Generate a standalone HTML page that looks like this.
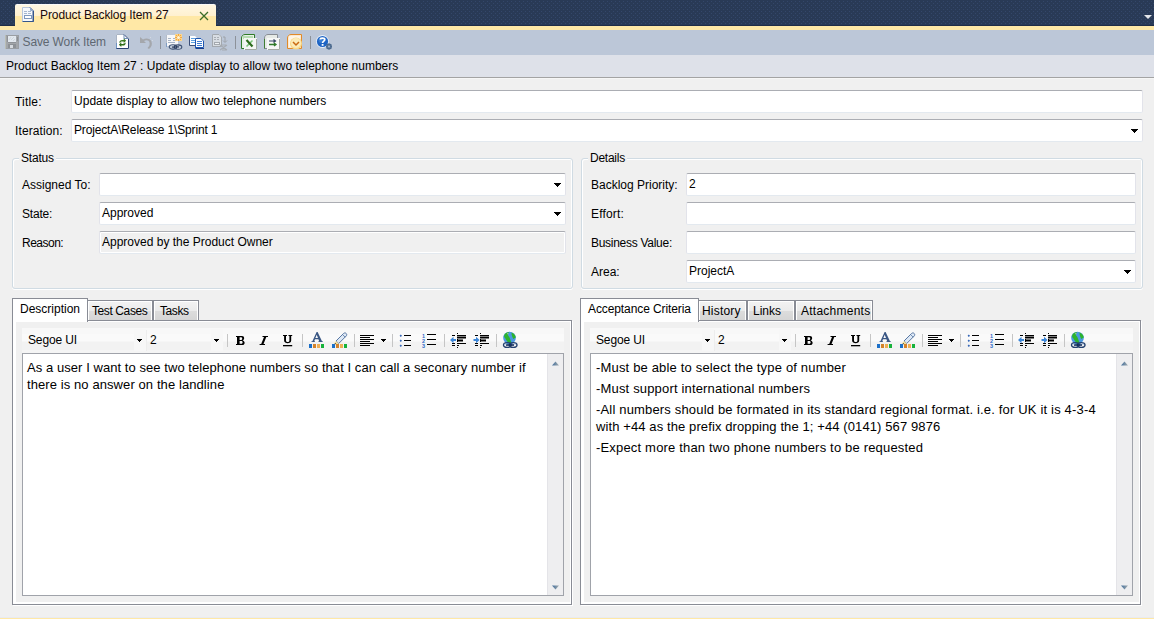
<!DOCTYPE html>
<html><head><meta charset="utf-8">
<style>
*{box-sizing:border-box;margin:0;padding:0}
html,body{width:1154px;height:619px;overflow:hidden;background:#F0F0F0;font-family:"Liberation Sans",sans-serif;font-size:12px;color:#000}
.a{position:absolute}
.t{position:absolute;white-space:nowrap;line-height:14px}
#nav{left:0;top:0;width:1154px;height:26px;background-color:#293A56}
#navline{left:0;top:25px;width:1154px;height:1px;background:#1F2D47}
#band{left:0;top:26px;width:1154px;height:4px;background:#FFE8A6}
#doctab{left:15px;top:4px;width:201px;height:26px;border-radius:2px 2px 0 0;background:linear-gradient(#FAFAF8 0,#FAFAF8 1px,#FFF7E2 1px,#FFF1D0 12px,#FFE8A6 12px,#FFE8A6 100%)}
#tb{left:0;top:30px;width:1154px;height:25px;background:#BCC7D8}
#cap{left:0;top:55px;width:1154px;height:22px;background:#DEE1E9}
#capline{left:0;top:77px;width:1154px;height:1px;background:#A3A3A3}
#capline2{left:0;top:78px;width:1154px;height:1px;background:#F6F6F6}
#botline{left:0;top:617px;width:1154px;height:2px;background:linear-gradient(#E9EBF0 0,#E9EBF0 1px,#FFE8A6 1px)}
.sep{position:absolute;width:1px;background:#8592A8}
.box{position:absolute;background:#fff;border:1px solid;border-color:#ABADB3 #E2E3EA #E3E9EF #E2E3EA;border-radius:2px}
.ro{background:#F0F0F0;box-shadow:inset 0 0 0 1px #fff}
.arr{position:absolute;width:0;height:0;border-left:3.5px solid transparent;border-right:3.5px solid transparent;border-top:4px solid #000}
.grp{position:absolute;border:1px solid #D0DBE3;border-radius:3px;box-shadow:inset 1px 1px 0 #fff,inset -1px 0 0 #fff,0 1px 0 #fff}
.grpt{position:absolute;background:#F0F0F0;padding:0 2px;white-space:nowrap;line-height:14px}
.tab{position:absolute;border:1px solid #898C95;border-bottom:none;background:linear-gradient(#F3F3F3 0,#EBEBEB 50%,#DDDDDD 51%,#D5D5D5 100%);box-shadow:inset 1px 1px 0 #fff,inset -1px 0 0 #fff}
.tabact{position:absolute;border:1px solid #898C95;border-bottom:none;background:#fff}
.panel{position:absolute;border:1px solid #898C95;background:#fff;box-shadow:1px 1px 0 #fff}
.pin{position:absolute;background:#F0F0F0}
.rtb{position:absolute;background:#fff}
.ed{position:absolute;background:#fff;border:1px solid #A0A3AA}
.sb{position:absolute;background:#EEEEF0;border-left:1px solid #E4E4E8}
.arr5{position:absolute;width:0;height:0;border-left:3px solid transparent;border-right:3px solid transparent;border-top:3px solid #000}
.tsep{position:absolute;top:6px;width:1px;height:13px;background:#C5C5C5}
.ed .txt{position:absolute;font-size:13px;line-height:17px;white-space:nowrap}
</style></head><body>
<div id="nav" class="a"></div>
<svg class="a" style="left:0;top:0" width="1154" height="25"><defs><pattern id="dots" x="0" y="0" width="4" height="4" patternUnits="userSpaceOnUse"><rect x="3" y="1" width="1" height="1" fill="#34476A"/><rect x="1" y="3" width="1" height="1" fill="#34476A"/></pattern></defs><rect width="1154" height="25" fill="url(#dots)"/></svg>
<div id="navline" class="a"></div>
<div id="band" class="a"></div>
<div id="doctab" class="a"></div>
<!-- doc icon -->
<svg class="a" style="left:22px;top:7px" width="12" height="15" viewBox="0 0 12 15">
 <path d="M0 0H8L12 4V15H0Z" fill="#F6F8FB"/>
 <path d="M0.5 14.5V0.5H8" stroke="#B9C7DB" fill="none"/>
 <path d="M8 0.5L11.5 4V14.5H0.5" stroke="#34558A" fill="none"/>
 <path d="M11 4V15" stroke="#34558A"/>
 <path d="M8.5 0.5V3.5H11.5" stroke="#8FA8CC" fill="none"/>
 <path d="M2 4.5H5M6 4.5H9M2 6.5H5M6 6.5H9" stroke="#A7B8D0"/>
 <rect x="2.5" y="8.5" width="7" height="3" fill="#FFFFFF" stroke="#7F98BD"/>
</svg>
<div class="t" style="left:40px;top:8px;color:#1A0A0A;letter-spacing:-0.09px">Product Backlog Item 27</div>
<svg class="a" style="left:199px;top:11px" width="10" height="10" viewBox="0 0 10 10"><path d="M1 1L9 9M9 1L1 9" stroke="#3A6E28" stroke-width="1.25"/></svg>
<!-- nav dropdown -->
<svg class="a" style="left:1144px;top:15px" width="8" height="4" viewBox="0 0 8 4"><path d="M0 0H8L4 4Z" fill="#E4E6EA"/></svg>

<div id="tb" class="a"></div>
<!-- floppy -->
<svg class="a" style="left:5px;top:35px" width="14" height="14" viewBox="0 0 14 14">
 <rect x="0" y="0" width="14" height="14" fill="#A3A6AA"/>
 <rect x="0.5" y="0.5" width="13" height="13" fill="none" stroke="#9A9EA3"/>
 <rect x="0" y="0" width="1" height="14" fill="#B9BDB6"/>
 <rect x="2" y="1" width="1" height="6" fill="#8E9196"/>
 <rect x="3" y="1" width="8" height="6" fill="#E2E8EF"/>
 <path d="M4 5L6 2M6 5L9 2M8 6L10 4" stroke="#C9CED4" stroke-width="0.7"/>
 <rect x="3" y="7" width="8" height="1" fill="#8F9398"/>
 <rect x="3" y="9" width="8" height="4" fill="#8D9196"/>
 <rect x="5" y="10" width="3" height="3" fill="#D6DADF"/>
 <rect x="12" y="2" width="1" height="4" fill="#8A8E93"/>
</svg>
<div class="t" style="left:22.5px;top:35px;color:#5F6771;letter-spacing:-0.12px">Save Work Item</div>
<!-- refresh -->
<svg class="a" style="left:116px;top:34px" width="13" height="15" viewBox="0 0 13 15">
 <path d="M0 0H8L13 5V15H0Z" fill="#FFFFFF"/>
 <path d="M0.5 15V0.5H8" stroke="#A9B4C4" fill="none"/>
 <path d="M0.5 9V15" stroke="#6E93C2"/>
 <path d="M8 0.5L12.5 5V14.5H0.5" stroke="#2B4272" fill="none"/>
 <path d="M8 0.5V4.5H12" stroke="#6F8DB8" fill="none"/>
 <g transform="translate(1.3,1.9) scale(0.8)"><path d="M2.5 8.5C2.5 6 4 5 6 5H8V3L11 6L8 9V7H6C4.8 7 4 7.5 3.8 8.5Z" fill="#3B7A1E"/>
 <path d="M10.5 8.5C10.5 11 9 12 7 12H5V14L2 11L5 8V10H7C8.2 10 9 9.5 9.2 8.5Z" fill="#2F6E18"/></g>
</svg>
<!-- undo disabled -->
<svg class="a" style="left:140px;top:35px" width="13" height="14" viewBox="0 0 13 14">
 <path d="M0 2V8H6L4 6C6 4.5 9 5 9.5 7.5C10 10 9 11.5 7.5 13L9 14C11.5 12 12.5 9.5 11.5 6.5C10.5 3.5 6 2.5 3 4.5Z" fill="#A4A7AC"/>
 <path d="M10 3L11 2M12 6L13 5" stroke="#D8DCE2" stroke-width="0.8"/>
</svg>
<div class="sep" style="left:160px;top:36px;height:13px;background:#8C9199"></div>
<!-- new linked -->
<svg class="a" style="left:166px;top:34px" width="17" height="16" viewBox="0 0 17 16">
 <rect x="0" y="1" width="12" height="11" fill="#F7F8FA"/>
 <path d="M0.5 1V13" stroke="#B4BCC8"/>
 <path d="M0.5 9V13" stroke="#7F9DC4"/>
 <path d="M2 4.5H5M7 4.5H10M2 6.5H5M7 6.5H10M2 8.5H9" stroke="#A7B4C6"/>
 <rect x="9" y="0" width="7" height="7" fill="#FBD58C"/>
 <path d="M12.5 0V7M9 3.5H16M10 1L15 6M15 1L10 6" stroke="#F29A2E" stroke-width="0.8"/>
 <circle cx="12.5" cy="3.5" r="1.5" fill="#FFF6D8"/>
 <ellipse cx="7" cy="13" rx="3.8" ry="2.1" fill="none" stroke="#3A4E70" stroke-width="1.1"/>
 <ellipse cx="12" cy="13" rx="3.8" ry="2.1" fill="none" stroke="#3A4E70" stroke-width="1.1"/>
 <path d="M6 13H13" stroke="#1E2E50" stroke-width="1.2"/>
 <path d="M4.5 11.8H8M11 14.2H14.5" stroke="#DDE8F5" stroke-width="0.6"/>
</svg>
<!-- copy -->
<svg class="a" style="left:189px;top:35px" width="16" height="14" viewBox="0 0 16 14">
 <path d="M0 1H6L8 3V10H0Z" fill="#FDFEFF"/>
 <path d="M0.5 1V10.5H7" stroke="#3A4E78" fill="none"/>
 <path d="M2 3.5H6M2 5.5H6M2 7.5H6" stroke="#5BA0E0"/>
 <path d="M6 3H12L15 6V13H6Z" fill="#FDFEFF"/>
 <path d="M6.5 13V3.5H12L14.5 6V12.5H6.5" stroke="#1F56B0" fill="none"/>
 <path d="M6.5 13.5H15" stroke="#183F8A"/>
 <path d="M8 6.5H13M8 8.5H13M8 10.5H13" stroke="#3C7BD2"/>
</svg>
<!-- disabled -->
<svg class="a" style="left:212px;top:34px" width="17" height="17" viewBox="0 0 17 17">
 <path d="M0 0H7L10 3V13H0Z" fill="#D8DDE3"/>
 <path d="M0.5 13V0.5H7L9.5 3V12.5H0.5" stroke="#A3A8AE" fill="none"/>
 <path d="M2 3.5H4M5 3.5H7M2 5.5H4M5 5.5H7" stroke="#A9AEB5"/>
 <rect x="2.5" y="8.5" width="5" height="2" fill="#EEF1F4" stroke="#A3A8AE"/>
 <path d="M11 3H13V8M11 6.5L13 8.5L15 6.5" stroke="#9DA2A8" fill="none"/>
 <path d="M8 11L15 16M15 11L8 16M10 11H14M10 16H14" stroke="#A6ABB1" stroke-width="1.1"/>
</svg>
<div class="sep" style="left:235px;top:36px;height:13px;background:#8C9199"></div>
<!-- excel -->
<svg class="a" style="left:241px;top:34px" width="16" height="16" viewBox="0 0 16 16">
 <path d="M0.5 14.5V4C0.5 2 2 0.5 4 0.5H13.5V14.5Z" fill="#E9F1E8" stroke="#2F7A28"/>
 <rect x="2" y="2" width="10" height="3" fill="#B6DDB2"/>
 <rect x="3" y="4" width="13" height="12" fill="#F4F6F4"/>
 <path d="M15.5 5V15.5H4" stroke="#A3AAA3" fill="none"/>
 <path d="M11.5 6.5L5.5 12.5" stroke="#7CC47A" stroke-width="1.6"/>
 <path d="M5.5 6L11.5 12.5" stroke="#2D6B1C" stroke-width="2.2"/>
</svg>
<!-- project -->
<svg class="a" style="left:264px;top:34px" width="16" height="16" viewBox="0 0 16 16">
 <path d="M0.5 14.5V4C0.5 2 2 0.5 4 0.5H13.5V14.5Z" fill="#E6EAE6" stroke="#878C92"/>
 <path d="M0.5 5V14.5" stroke="#3F7E33"/>
 <rect x="3" y="4" width="13" height="12" fill="#F6F7F6"/>
 <path d="M15.5 5V15.5H4" stroke="#A3AAA3" fill="none"/>
 <path d="M5 7H11M9.5 5.5L11.5 7L9.5 8.5" stroke="#3A4A66" stroke-width="1.2" fill="none"/>
 <path d="M5 10.5H12M10 9L12 10.5L10 12" stroke="#2F7A28" stroke-width="1.3" fill="none"/>
</svg>
<!-- outlook -->
<svg class="a" style="left:287px;top:34px" width="16" height="16" viewBox="0 0 16 16">
 <path d="M0.5 14.5V4C0.5 2 2 0.5 4 0.5H14.5V14.5Z" fill="#FBE9D0" stroke="#E18A2A"/>
 <rect x="2" y="2" width="11" height="11" fill="#FFF5E6"/>
 <circle cx="9" cy="9.5" r="6" fill="#F7D98A"/>
 <circle cx="9" cy="9" r="5" fill="#FCEBB8"/>
 <path d="M6 8L9 11L12 8" stroke="#C96A12" stroke-width="1.5" fill="none"/>
</svg>
<div class="sep" style="left:310px;top:36px;height:13px;background:#8C9199"></div>
<!-- help -->
<svg class="a" style="left:316px;top:35px" width="17" height="15" viewBox="0 0 17 15">
 <circle cx="6.5" cy="6.5" r="6.5" fill="#E8F0FA"/>
 <circle cx="6.5" cy="6.5" r="5.6" fill="#1E64C4"/>
 <circle cx="5.5" cy="5" r="3" fill="#4A8EE0" opacity="0.6"/>
 <path d="M4.3 4.6C4.3 2.6 8.8 2.6 8.8 4.6C8.8 6.2 6.6 6.2 6.6 8" stroke="#fff" stroke-width="1.7" fill="none"/>
 <rect x="5.7" y="9" width="1.8" height="1.8" fill="#fff"/>
 <circle cx="13" cy="11.5" r="2.2" fill="none" stroke="#4C6A8E" stroke-width="1.4"/>
 <path d="M13 8.5V14.5M10 11.5H16M11 9.5L15 13.5M15 9.5L11 13.5" stroke="#4C6A8E" stroke-width="0.9"/>
 <circle cx="13" cy="11.5" r="0.8" fill="#BCC7D8"/>
</svg>

<div id="cap" class="a"></div>
<div class="t" style="left:6px;top:59px">Product Backlog Item 27 : Update display to allow two telephone numbers</div>
<div id="capline" class="a"></div>
<div id="capline2" class="a"></div>

<!-- Title / Iteration -->
<div class="t" style="left:15px;top:95px;letter-spacing:0.2px">Title:</div>
<div class="box" style="left:71px;top:90px;width:1072px;height:23px"></div>
<div class="t" style="left:74px;top:94px;letter-spacing:0.02px">Update display to allow two telephone numbers</div>
<div class="t" style="left:15px;top:124px;letter-spacing:0.11px">Iteration:</div>
<div class="box" style="left:71px;top:119px;width:1072px;height:23px"></div>
<div class="t" style="left:74px;top:123px;letter-spacing:-0.15px">ProjectA\Release 1\Sprint 1</div>
<svg class="a" style="left:1131px;top:129px" width="7" height="4" shape-rendering="crispEdges"><path d="M0 0H7V1H6V2H5V3H4V4H3V3H2V2H1V1H0Z" fill="#000"/></svg>

<!-- Status group -->
<div class="grp" style="left:12px;top:158px;width:561px;height:131px"></div>
<div class="grpt" style="left:19px;top:151px;letter-spacing:-0.2px">Status</div>
<div class="t" style="left:22px;top:178px">Assigned To:</div>
<div class="box" style="left:99px;top:173px;width:467px;height:23px"></div>
<svg class="a" style="left:554px;top:183px" width="7" height="4" shape-rendering="crispEdges"><path d="M0 0H7V1H6V2H5V3H4V4H3V3H2V2H1V1H0Z" fill="#000"/></svg>
<div class="t" style="left:22px;top:207px;letter-spacing:-0.2px">State:</div>
<div class="box" style="left:99px;top:202px;width:467px;height:23px"></div>
<div class="t" style="left:102px;top:206px">Approved</div>
<svg class="a" style="left:554px;top:212px" width="7" height="4" shape-rendering="crispEdges"><path d="M0 0H7V1H6V2H5V3H4V4H3V3H2V2H1V1H0Z" fill="#000"/></svg>
<div class="t" style="left:22px;top:236px;letter-spacing:-0.5px">Reason:</div>
<div class="box ro" style="left:99px;top:231px;width:467px;height:23px"></div>
<div class="t" style="left:102px;top:235px">Approved by the Product Owner</div>

<!-- Details group -->
<div class="grp" style="left:581px;top:158px;width:562px;height:131px"></div>
<div class="grpt" style="left:588px;top:151px;letter-spacing:-0.25px">Details</div>
<div class="t" style="left:591px;top:178px">Backlog Priority:</div>
<div class="box" style="left:686px;top:173px;width:450px;height:23px"></div>
<div class="t" style="left:689px;top:177px">2</div>
<div class="t" style="left:591px;top:207px;letter-spacing:0.17px">Effort:</div>
<div class="box" style="left:686px;top:202px;width:450px;height:23px"></div>
<div class="t" style="left:591px;top:236px;letter-spacing:-0.28px">Business Value:</div>
<div class="box" style="left:686px;top:231px;width:450px;height:23px"></div>
<div class="t" style="left:591px;top:265px">Area:</div>
<div class="box" style="left:686px;top:260px;width:450px;height:23px"></div>
<div class="t" style="left:689px;top:264px">ProjectA</div>
<svg class="a" style="left:1124px;top:270px" width="7" height="4" shape-rendering="crispEdges"><path d="M0 0H7V1H6V2H5V3H4V4H3V3H2V2H1V1H0Z" fill="#000"/></svg>

<!-- Left tab control -->
<div class="panel" style="left:12px;top:320px;width:560px;height:285px"></div>
<div class="pin" style="left:16px;top:322px;width:554px;height:280px"></div>
<div class="tab" style="left:87px;top:300px;width:66px;height:20px"></div>
<div class="tab" style="left:153px;top:300px;width:46px;height:20px"></div>
<div class="tabact" style="left:12px;top:298px;width:76px;height:24px"></div>
<div class="t" style="left:20px;top:302px">Description</div>
<div class="t" style="left:92px;top:304px;letter-spacing:-0.4px">Test Cases</div>
<div class="t" style="left:160px;top:304px;letter-spacing:-0.4px">Tasks</div>

<!-- Right tab control -->
<div class="panel" style="left:580px;top:320px;width:561px;height:285px"></div>
<div class="pin" style="left:584px;top:322px;width:555px;height:280px"></div>
<div class="tab" style="left:698px;top:300px;width:49px;height:20px"></div>
<div class="tab" style="left:747px;top:300px;width:48px;height:20px"></div>
<div class="tab" style="left:795px;top:300px;width:78px;height:20px"></div>
<div class="tabact" style="left:580px;top:298px;width:119px;height:24px"></div>
<div class="t" style="left:588px;top:302px;letter-spacing:-0.1px">Acceptance Criteria</div>
<div class="t" style="left:702px;top:304px;letter-spacing:0.2px">History</div>
<div class="t" style="left:753px;top:304px">Links</div>
<div class="t" style="left:801px;top:304px;letter-spacing:0.25px">Attachments</div>

<!-- EDITORS -->
<div class="a" style="left:22px;top:328px;width:542px;height:25px;background:linear-gradient(#F8F8F8 0,#F8F8F8 6px,#FAFAFA 6px,#FAFAFA 13px,#F2F2F2 14px,#F2F2F2 22px,#F5F5F5 22px)">
 <div class="t" style="left:6px;top:5px;font-size:12px;letter-spacing:-0.15px">Segoe UI</div>
 <div class="a" style="left:112px;top:1px;width:12px;height:22px;background:#F7F7F7"></div>
 <svg class="a" style="left:115px;top:11px" width="5" height="3" shape-rendering="crispEdges"><path d="M0 0H5V1H4V2H3V3H2V2H1V1H0Z" fill="#000"/></svg>
 <div class="a" style="left:124px;top:2px;width:1px;height:21px;background:#EDEDED"></div>
 <div class="t" style="left:128px;top:5px;font-size:12px">2</div>
 <div class="a" style="left:189px;top:1px;width:12px;height:22px;background:#F7F7F7"></div>
 <svg class="a" style="left:192px;top:11px" width="5" height="3" shape-rendering="crispEdges"><path d="M0 0H5V1H4V2H3V3H2V2H1V1H0Z" fill="#000"/></svg>
 <div class="tsep" style="left:205px"></div>
 <svg class="a" style="left:214px;top:8px" width="10" height="10" viewBox="0 0 10 10"><path fill-rule="evenodd" d="M0 0H6C8.8 0 8.8 3.9 6.6 4.4C9.4 4.8 9.4 9 6.2 9H0V8H1V1H0ZM3.6 1.2V3.9H5.3C6.6 3.9 6.6 1.2 5.3 1.2ZM3.6 5V7.8H5.5C7 7.8 7 5 5.5 5Z" fill="#000"/></svg>
 <svg class="a" style="left:237px;top:8px" width="10" height="10" viewBox="0 0 10 10"><path d="M3.6 0H9V1.1H7.3L4.5 7.9H6V9H0.6V7.9H2.2L5 1.1H3.4Z" fill="#000"/></svg>
 <svg class="a" style="left:261px;top:7px" width="10" height="12" viewBox="0 0 10 12"><path d="M0 0H4V1.1H3V5.6C3 7.6 6.4 7.6 6.4 5.6V1.1H5.5V0H9.2V1.1H8.2V5.6C8.2 9.2 1.1 9.2 1.1 5.6V1.1H0Z" fill="#000"/><rect x="0" y="10" width="9.2" height="1.3" fill="#000"/></svg>
 <div class="tsep" style="left:280px"></div>
 <svg class="a" style="left:287px;top:4px" width="16" height="16" viewBox="0 0 16 16">
  <path fill-rule="evenodd" d="M2.5 10H6V9.2H5.2L6 7.2H9.4L10.2 9.2H9.4V10H13.8V9.2H13L8.6 0H7.6L3.4 9.2H2.5ZM6.4 6.1L7.7 2.8L9 6.1Z" fill="#3A5784"/>
  <rect x="0" y="12" width="3" height="4" fill="#1B6FC8"/><rect x="4" y="12" width="3" height="4" fill="#D4832B"/><rect x="8" y="12" width="3" height="4" fill="#EEAF55"/><rect x="12" y="12" width="3" height="4" fill="#16B23A"/>
 </svg>
 <svg class="a" style="left:310px;top:4px" width="16" height="16" viewBox="0 0 16 16">
  <path d="M4 9L11.5 1.5C12.3 0.7 13.6 0.7 14.2 1.5C14.9 2.2 14.9 3.3 14.2 4L6.7 11.5Z" fill="#DDE8F5" stroke="#5877A3" stroke-width="1"/>
  <path d="M10.5 2.5L13.2 5.2" stroke="#5877A3" stroke-width="0.8"/>
  <path d="M2 11.5L4 9L6.7 11.5L3.3 12.5Z" fill="#F1DE9A"/>
  <path d="M2 12.5L3.5 11L4 12Z" fill="#222"/>
  <rect x="0" y="12" width="3" height="4" fill="#1B6FC8"/><rect x="4" y="12" width="3" height="4" fill="#D4832B"/><rect x="8" y="12" width="3" height="4" fill="#EEAF55"/><rect x="12" y="12" width="3" height="4" fill="#16B23A"/>
 </svg>
 <div class="tsep" style="left:332px"></div>
 <svg class="a" style="left:338px;top:7px" width="15" height="12" viewBox="0 0 15 12">
  <path d="M0 0.5H14M0 2.5H10M0 4.5H14M0 6.5H10M0 8.5H14M0 10.5H10" stroke="#000" stroke-width="1"/>
 </svg>
 <svg class="a" style="left:359px;top:11px" width="5" height="3" shape-rendering="crispEdges"><path d="M0 0H5V1H4V2H3V3H2V2H1V1H0Z" fill="#000"/></svg>
 <div class="tsep" style="left:370px"></div>
 <svg class="a" style="left:377px;top:6px" width="14" height="14" viewBox="0 0 14 14">
  <path d="M1.8 0.5L3 1.8L1.8 3L0.6 1.8ZM1.8 5.5L3 6.8L1.8 8L0.6 6.8ZM1.8 10.5L3 11.8L1.8 13L0.6 11.8Z" fill="#2F62B5"/>
  <path d="M5 1.5H12M5 6.5H12M5 11.5H12" stroke="#000" stroke-width="1.1"/>
 </svg>
 <svg class="a" style="left:400px;top:5px" width="16" height="15" viewBox="0 0 16 15">
  <text x="0" y="5" font-family="Liberation Sans" font-weight="bold" font-size="5.5" fill="#2F6AC8">1</text>
  <text x="0" y="10" font-family="Liberation Sans" font-weight="bold" font-size="5.5" fill="#2F6AC8">2</text>
  <text x="0" y="15" font-family="Liberation Sans" font-weight="bold" font-size="5.5" fill="#2F6AC8">3</text>
  <path d="M5 1.5H14M5 6.5H14M5 11.5H14" stroke="#000" stroke-width="1.1"/>
 </svg>
 <div class="tsep" style="left:422px"></div>
 <svg class="a" style="left:428px;top:5px" width="17" height="15" viewBox="0 0 17 15">
  <path d="M7.5 0V1M7.5 2V15" stroke="#000" stroke-width="1" stroke-dasharray="1 1"/>
  <path d="M2 2.5H5M7 2.5H16M7 10.5H16M2 10.5H5M2 12.5H5M7 12.5H9" stroke="#000" stroke-width="1"/>
  <path d="M7 4.5H16M7 7.5H13" stroke="#000" stroke-width="2"/>
  <path d="M0 7L3.5 3.8V6H6V8H3.5V10.2Z" fill="#3C86D8"/>
 </svg>
 <svg class="a" style="left:451px;top:5px" width="17" height="15" viewBox="0 0 17 15">
  <path d="M7.5 0V1M7.5 2V15" stroke="#000" stroke-width="1" stroke-dasharray="1 1"/>
  <path d="M2 2.5H5M7 2.5H16M7 10.5H16M2 10.5H5M2 12.5H5M7 12.5H9" stroke="#000" stroke-width="1"/>
  <path d="M7 4.5H16M7 7.5H13" stroke="#000" stroke-width="2"/>
  <path d="M6.5 7L3 3.8V6H0.5V8H3V10.2Z" fill="#3C86D8"/>
 </svg>
 <div class="tsep" style="left:474px"></div>
 <svg class="a" style="left:480px;top:3px" width="17" height="18" viewBox="0 0 17 18">
  <circle cx="7.5" cy="7" r="6.3" fill="#4B97E0"/>
  <path d="M2.5 3.5C4 1.5 6 1 7 1.5C6 3 5.5 4 6.5 5C7.5 6 8 7.5 8.5 9L9.5 12L7.5 13C5.5 11 4 9 3.5 7.5C2 6.5 1.8 5 2.5 3.5Z" fill="#2DB42D"/>
  <path d="M9.5 1.5C11.5 2 13.5 4 13.8 6.5L11.2 8C10.5 6 9.3 4 9.5 1.5Z" fill="#2DB42D"/>
  <path d="M5 2.5L6.5 2.2L6 3.5Z" fill="#F2F2D8"/>
  <ellipse cx="5.3" cy="14" rx="3.8" ry="2.4" fill="none" stroke="#23406E" stroke-width="1.4"/>
  <ellipse cx="11.2" cy="14" rx="3.8" ry="2.4" fill="none" stroke="#23406E" stroke-width="1.4"/>
  <path d="M4 14H12" stroke="#0E2A5A" stroke-width="1.6"/>
  <path d="M2.5 13.2H4.5M12 13.2H14" stroke="#9CC0E8" stroke-width="0.7"/>
 </svg>
</div>
<div class="ed" style="left:22px;top:353px;width:542px;height:243px">
 <div class="txt" style="left:4px;top:5px;letter-spacing:0.06px">As a user I want to see two telephone numbers so that I can call a seconary number if</div>
 <div class="txt" style="left:4px;top:22px;letter-spacing:0.09px">there is no answer on the landline</div>
 <div class="sb" style="left:524px;top:0;width:16px;height:241px"></div>
 <svg class="a" style="left:529px;top:7px" width="8" height="5" viewBox="0 0 8 5"><defs><linearGradient id="ga22" x1="0" x2="1"><stop offset="0" stop-color="#3F6C9C"/><stop offset="1" stop-color="#A4ACAE"/></linearGradient></defs><path d="M0 4.5L3.5 0.5L7 4.5Z" fill="url(#ga22)"/></svg>
 <svg class="a" style="left:529px;top:231px" width="8" height="5" viewBox="0 0 8 5"><defs><linearGradient id="gb22" x1="0" x2="1"><stop offset="0" stop-color="#3F6C9C"/><stop offset="1" stop-color="#A4ACAE"/></linearGradient></defs><path d="M0 0.5L3.5 4.5L7 0.5Z" fill="url(#gb22)"/></svg>
</div>
<div class="a" style="left:590px;top:328px;width:543px;height:25px;background:linear-gradient(#F8F8F8 0,#F8F8F8 6px,#FAFAFA 6px,#FAFAFA 13px,#F2F2F2 14px,#F2F2F2 22px,#F5F5F5 22px)">
 <div class="t" style="left:6px;top:5px;font-size:12px;letter-spacing:-0.15px">Segoe UI</div>
 <div class="a" style="left:112px;top:1px;width:12px;height:22px;background:#F7F7F7"></div>
 <svg class="a" style="left:115px;top:11px" width="5" height="3" shape-rendering="crispEdges"><path d="M0 0H5V1H4V2H3V3H2V2H1V1H0Z" fill="#000"/></svg>
 <div class="a" style="left:124px;top:2px;width:1px;height:21px;background:#EDEDED"></div>
 <div class="t" style="left:128px;top:5px;font-size:12px">2</div>
 <div class="a" style="left:189px;top:1px;width:12px;height:22px;background:#F7F7F7"></div>
 <svg class="a" style="left:192px;top:11px" width="5" height="3" shape-rendering="crispEdges"><path d="M0 0H5V1H4V2H3V3H2V2H1V1H0Z" fill="#000"/></svg>
 <div class="tsep" style="left:205px"></div>
 <svg class="a" style="left:214px;top:8px" width="10" height="10" viewBox="0 0 10 10"><path fill-rule="evenodd" d="M0 0H6C8.8 0 8.8 3.9 6.6 4.4C9.4 4.8 9.4 9 6.2 9H0V8H1V1H0ZM3.6 1.2V3.9H5.3C6.6 3.9 6.6 1.2 5.3 1.2ZM3.6 5V7.8H5.5C7 7.8 7 5 5.5 5Z" fill="#000"/></svg>
 <svg class="a" style="left:237px;top:8px" width="10" height="10" viewBox="0 0 10 10"><path d="M3.6 0H9V1.1H7.3L4.5 7.9H6V9H0.6V7.9H2.2L5 1.1H3.4Z" fill="#000"/></svg>
 <svg class="a" style="left:261px;top:7px" width="10" height="12" viewBox="0 0 10 12"><path d="M0 0H4V1.1H3V5.6C3 7.6 6.4 7.6 6.4 5.6V1.1H5.5V0H9.2V1.1H8.2V5.6C8.2 9.2 1.1 9.2 1.1 5.6V1.1H0Z" fill="#000"/><rect x="0" y="10" width="9.2" height="1.3" fill="#000"/></svg>
 <div class="tsep" style="left:280px"></div>
 <svg class="a" style="left:287px;top:4px" width="16" height="16" viewBox="0 0 16 16">
  <path fill-rule="evenodd" d="M2.5 10H6V9.2H5.2L6 7.2H9.4L10.2 9.2H9.4V10H13.8V9.2H13L8.6 0H7.6L3.4 9.2H2.5ZM6.4 6.1L7.7 2.8L9 6.1Z" fill="#3A5784"/>
  <rect x="0" y="12" width="3" height="4" fill="#1B6FC8"/><rect x="4" y="12" width="3" height="4" fill="#D4832B"/><rect x="8" y="12" width="3" height="4" fill="#EEAF55"/><rect x="12" y="12" width="3" height="4" fill="#16B23A"/>
 </svg>
 <svg class="a" style="left:310px;top:4px" width="16" height="16" viewBox="0 0 16 16">
  <path d="M4 9L11.5 1.5C12.3 0.7 13.6 0.7 14.2 1.5C14.9 2.2 14.9 3.3 14.2 4L6.7 11.5Z" fill="#DDE8F5" stroke="#5877A3" stroke-width="1"/>
  <path d="M10.5 2.5L13.2 5.2" stroke="#5877A3" stroke-width="0.8"/>
  <path d="M2 11.5L4 9L6.7 11.5L3.3 12.5Z" fill="#F1DE9A"/>
  <path d="M2 12.5L3.5 11L4 12Z" fill="#222"/>
  <rect x="0" y="12" width="3" height="4" fill="#1B6FC8"/><rect x="4" y="12" width="3" height="4" fill="#D4832B"/><rect x="8" y="12" width="3" height="4" fill="#EEAF55"/><rect x="12" y="12" width="3" height="4" fill="#16B23A"/>
 </svg>
 <div class="tsep" style="left:332px"></div>
 <svg class="a" style="left:338px;top:7px" width="15" height="12" viewBox="0 0 15 12">
  <path d="M0 0.5H14M0 2.5H10M0 4.5H14M0 6.5H10M0 8.5H14M0 10.5H10" stroke="#000" stroke-width="1"/>
 </svg>
 <svg class="a" style="left:359px;top:11px" width="5" height="3" shape-rendering="crispEdges"><path d="M0 0H5V1H4V2H3V3H2V2H1V1H0Z" fill="#000"/></svg>
 <div class="tsep" style="left:370px"></div>
 <svg class="a" style="left:377px;top:6px" width="14" height="14" viewBox="0 0 14 14">
  <path d="M1.8 0.5L3 1.8L1.8 3L0.6 1.8ZM1.8 5.5L3 6.8L1.8 8L0.6 6.8ZM1.8 10.5L3 11.8L1.8 13L0.6 11.8Z" fill="#2F62B5"/>
  <path d="M5 1.5H12M5 6.5H12M5 11.5H12" stroke="#000" stroke-width="1.1"/>
 </svg>
 <svg class="a" style="left:400px;top:5px" width="16" height="15" viewBox="0 0 16 15">
  <text x="0" y="5" font-family="Liberation Sans" font-weight="bold" font-size="5.5" fill="#2F6AC8">1</text>
  <text x="0" y="10" font-family="Liberation Sans" font-weight="bold" font-size="5.5" fill="#2F6AC8">2</text>
  <text x="0" y="15" font-family="Liberation Sans" font-weight="bold" font-size="5.5" fill="#2F6AC8">3</text>
  <path d="M5 1.5H14M5 6.5H14M5 11.5H14" stroke="#000" stroke-width="1.1"/>
 </svg>
 <div class="tsep" style="left:422px"></div>
 <svg class="a" style="left:428px;top:5px" width="17" height="15" viewBox="0 0 17 15">
  <path d="M7.5 0V1M7.5 2V15" stroke="#000" stroke-width="1" stroke-dasharray="1 1"/>
  <path d="M2 2.5H5M7 2.5H16M7 10.5H16M2 10.5H5M2 12.5H5M7 12.5H9" stroke="#000" stroke-width="1"/>
  <path d="M7 4.5H16M7 7.5H13" stroke="#000" stroke-width="2"/>
  <path d="M0 7L3.5 3.8V6H6V8H3.5V10.2Z" fill="#3C86D8"/>
 </svg>
 <svg class="a" style="left:451px;top:5px" width="17" height="15" viewBox="0 0 17 15">
  <path d="M7.5 0V1M7.5 2V15" stroke="#000" stroke-width="1" stroke-dasharray="1 1"/>
  <path d="M2 2.5H5M7 2.5H16M7 10.5H16M2 10.5H5M2 12.5H5M7 12.5H9" stroke="#000" stroke-width="1"/>
  <path d="M7 4.5H16M7 7.5H13" stroke="#000" stroke-width="2"/>
  <path d="M6.5 7L3 3.8V6H0.5V8H3V10.2Z" fill="#3C86D8"/>
 </svg>
 <div class="tsep" style="left:474px"></div>
 <svg class="a" style="left:480px;top:3px" width="17" height="18" viewBox="0 0 17 18">
  <circle cx="7.5" cy="7" r="6.3" fill="#4B97E0"/>
  <path d="M2.5 3.5C4 1.5 6 1 7 1.5C6 3 5.5 4 6.5 5C7.5 6 8 7.5 8.5 9L9.5 12L7.5 13C5.5 11 4 9 3.5 7.5C2 6.5 1.8 5 2.5 3.5Z" fill="#2DB42D"/>
  <path d="M9.5 1.5C11.5 2 13.5 4 13.8 6.5L11.2 8C10.5 6 9.3 4 9.5 1.5Z" fill="#2DB42D"/>
  <path d="M5 2.5L6.5 2.2L6 3.5Z" fill="#F2F2D8"/>
  <ellipse cx="5.3" cy="14" rx="3.8" ry="2.4" fill="none" stroke="#23406E" stroke-width="1.4"/>
  <ellipse cx="11.2" cy="14" rx="3.8" ry="2.4" fill="none" stroke="#23406E" stroke-width="1.4"/>
  <path d="M4 14H12" stroke="#0E2A5A" stroke-width="1.6"/>
  <path d="M2.5 13.2H4.5M12 13.2H14" stroke="#9CC0E8" stroke-width="0.7"/>
 </svg>
</div>
<div class="ed" style="left:590px;top:353px;width:543px;height:243px">
 <div class="txt" style="left:5px;top:5px;letter-spacing:0.17px">-Must be able to select the type of number</div>
 <div class="txt" style="left:5px;top:26px;letter-spacing:0.17px">-Must support international numbers</div>
 <div class="txt" style="left:5px;top:47px;letter-spacing:0.17px">-All numbers should be formated in its standard regional format. i.e. for UK it is 4-3-4</div>
 <div class="txt" style="left:5px;top:64px;letter-spacing:0.105px">with +44 as the prefix dropping the 1; +44 (0141) 567 9876</div>
 <div class="txt" style="left:5px;top:85px;letter-spacing:0.18px">-Expect more than two phone numbers to be requested</div>
 <div class="sb" style="left:525px;top:0;width:16px;height:241px"></div>
 <svg class="a" style="left:530px;top:7px" width="8" height="5" viewBox="0 0 8 5"><defs><linearGradient id="ga590" x1="0" x2="1"><stop offset="0" stop-color="#3F6C9C"/><stop offset="1" stop-color="#A4ACAE"/></linearGradient></defs><path d="M0 4.5L3.5 0.5L7 4.5Z" fill="url(#ga590)"/></svg>
 <svg class="a" style="left:530px;top:231px" width="8" height="5" viewBox="0 0 8 5"><defs><linearGradient id="gb590" x1="0" x2="1"><stop offset="0" stop-color="#3F6C9C"/><stop offset="1" stop-color="#A4ACAE"/></linearGradient></defs><path d="M0 0.5L3.5 4.5L7 0.5Z" fill="url(#gb590)"/></svg>
</div>
<!-- /EDITORS -->
<div id="botline" class="a"></div>
</body></html>
